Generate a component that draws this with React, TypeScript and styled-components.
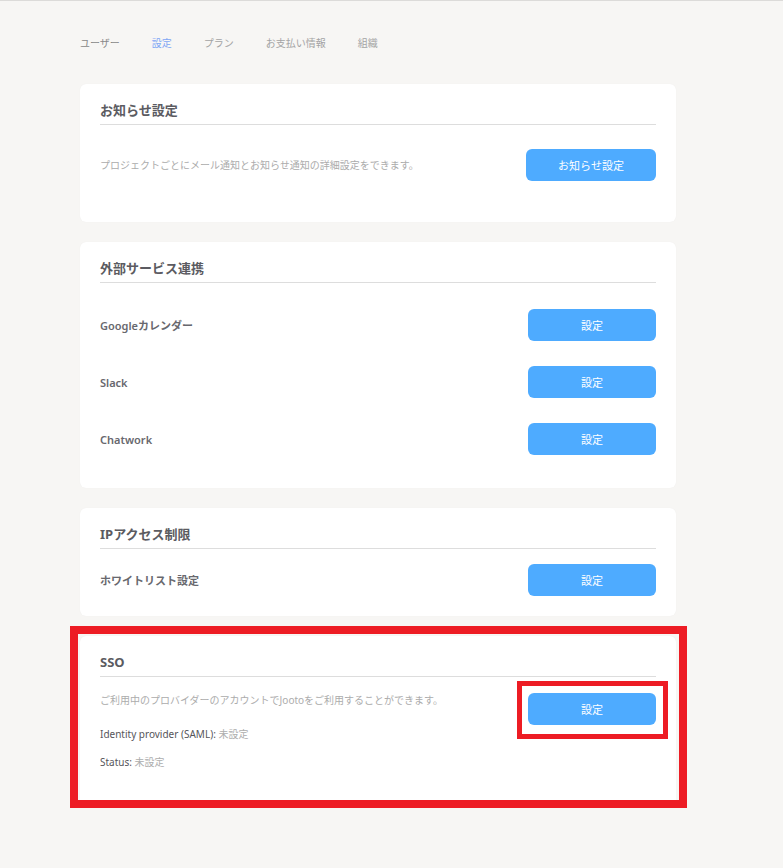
import React from "react";
import styled, { createGlobalStyle } from "styled-components";

const GlobalStyle = createGlobalStyle`
  html, body {
    margin: 0;
    padding: 0;
    background: #f7f6f4;
  }
  body {
    font-family: "Noto Sans", "Noto Sans CJK JP", sans-serif;
    -webkit-font-smoothing: antialiased;
  }
`;

const Page = styled.div`
  min-height: 868px;
  border-top: 1px solid #dcdbd9;
  box-sizing: border-box;
  padding: 35px 0 40px 80px;
`;

const Main = styled.div`
  width: 596px;
  display: flex;
  flex-direction: column;
`;

const Tabs = styled.nav`
  display: flex;
  gap: 32px;
  height: 14px;
  margin-bottom: 34px;
`;

const Tab = styled.span<{ $active?: boolean; $dark?: boolean }>`
  font-size: 10px;
  line-height: 14px;
  color: ${(p) => (p.$active ? "#7ea6f4" : p.$dark ? "#888888" : "#a4a4a4")};
`;

const Cards = styled.div`
  display: flex;
  flex-direction: column;
  gap: 20px;
`;

const Card = styled.section`
  position: relative;
  background: #ffffff;
  border-radius: 6px;
  padding: 16px 20px 0;
  box-shadow: 0 0 1px rgba(0, 0, 0, 0.06);
`;

const CardTitle = styled.h2`
  margin: 0;
  font-size: 13px;
  line-height: 20px;
  font-weight: 700;
  color: #5b5b61;
  padding-bottom: 4px;
  border-bottom: 1px solid #dddddd;
`;

const Body = styled.div<{ $pt: number; $pb: number; $gap?: number }>`
  display: flex;
  flex-direction: column;
  gap: ${(p) => p.$gap ?? 0}px;
  padding: ${(p) => p.$pt}px 0 ${(p) => p.$pb}px;
`;

const Row = styled.div<{ $align?: string }>`
  display: flex;
  justify-content: space-between;
  align-items: ${(p) => p.$align ?? "center"};
`;

const Label = styled.span`
  font-size: 11px;
  font-weight: 600;
  color: #68686e;
`;

const Desc = styled.p<{ $mb?: number }>`
  margin: 0 0 ${(p) => p.$mb ?? 0}px;
  font-size: 10px;
  line-height: 16px;
  color: #acacac;
`;

const InfoCol = styled.div`
  display: flex;
  flex-direction: column;
  gap: 12px;
`;

const InfoLine = styled.p`
  margin: 0;
  font-size: 10px;
  line-height: 16px;
  color: #555559;
`;

const Muted = styled.span`
  color: #adadad;
`;

const ButtonWrap = styled.div<{ $mt?: number }>`
  position: relative;
  margin-top: ${(p) => p.$mt ?? 0}px;
`;

const Button = styled.button<{ $w: number }>`
  width: ${(p) => p.$w}px;
  height: 32px;
  border: none;
  border-radius: 6px;
  background: #4eabff;
  color: #ffffff;
  font-family: "Noto Sans", "Noto Sans CJK JP", sans-serif;
  font-size: 11px;
  cursor: pointer;
  padding: 0;
`;

const Highlight = styled.div<{ $t: number; $r: number; $b: number; $l: number; $bw: number }>`
  position: absolute;
  top: ${(p) => p.$t}px;
  right: ${(p) => p.$r}px;
  bottom: ${(p) => p.$b}px;
  left: ${(p) => p.$l}px;
  border: ${(p) => p.$bw}px solid #ed1c24;
  pointer-events: none;
`;

export default function App() {
  return (
    <>
      <GlobalStyle />
      <Page>
        <Main>
          <Tabs>
            <Tab $dark>ユーザー</Tab>
            <Tab $active>設定</Tab>
            <Tab>プラン</Tab>
            <Tab>お支払い情報</Tab>
            <Tab>組織</Tab>
          </Tabs>
          <Cards>
            <Card>
              <CardTitle>お知らせ設定</CardTitle>
              <Body $pt={24} $pb={41}>
                <Row>
                  <Desc>プロジェクトごとにメール通知とお知らせ通知の詳細設定をできます。</Desc>
                  <Button $w={130}>お知らせ設定</Button>
                </Row>
              </Body>
            </Card>

            <Card>
              <CardTitle>外部サービス連携</CardTitle>
              <Body $pt={26} $pb={33} $gap={25}>
                <Row>
                  <Label>Googleカレンダー</Label>
                  <Button $w={128}>設定</Button>
                </Row>
                <Row>
                  <Label>Slack</Label>
                  <Button $w={128}>設定</Button>
                </Row>
                <Row>
                  <Label>Chatwork</Label>
                  <Button $w={128}>設定</Button>
                </Row>
              </Body>
            </Card>

            <Card>
              <CardTitle>IPアクセス制限</CardTitle>
              <Body $pt={15} $pb={20}>
                <Row>
                  <Label>ホワイトリスト設定</Label>
                  <Button $w={128}>設定</Button>
                </Row>
              </Body>
            </Card>

            <Card>
              <Highlight $t={-10} $r={-11} $b={-2} $l={-10} $bw={8} />
              <CardTitle>SSO</CardTitle>
              <Body $pt={15} $pb={36}>
                <Row $align="flex-start">
                  <InfoCol>
                    <Desc $mb={6}>ご利用中のプロバイダーのアカウントでJootoをご利用することができます。</Desc>
                    <InfoLine>
                      Identity provider (SAML): <Muted>未設定</Muted>
                    </InfoLine>
                    <InfoLine>
                      Status: <Muted>未設定</Muted>
                    </InfoLine>
                  </InfoCol>
                  <ButtonWrap $mt={1}>
                    <Button $w={128}>設定</Button>
                    <Highlight $t={-12} $r={-12} $b={-14} $l={-11} $bw={5} />
                  </ButtonWrap>
                </Row>
              </Body>
            </Card>
          </Cards>
        </Main>
      </Page>
    </>
  );
}
